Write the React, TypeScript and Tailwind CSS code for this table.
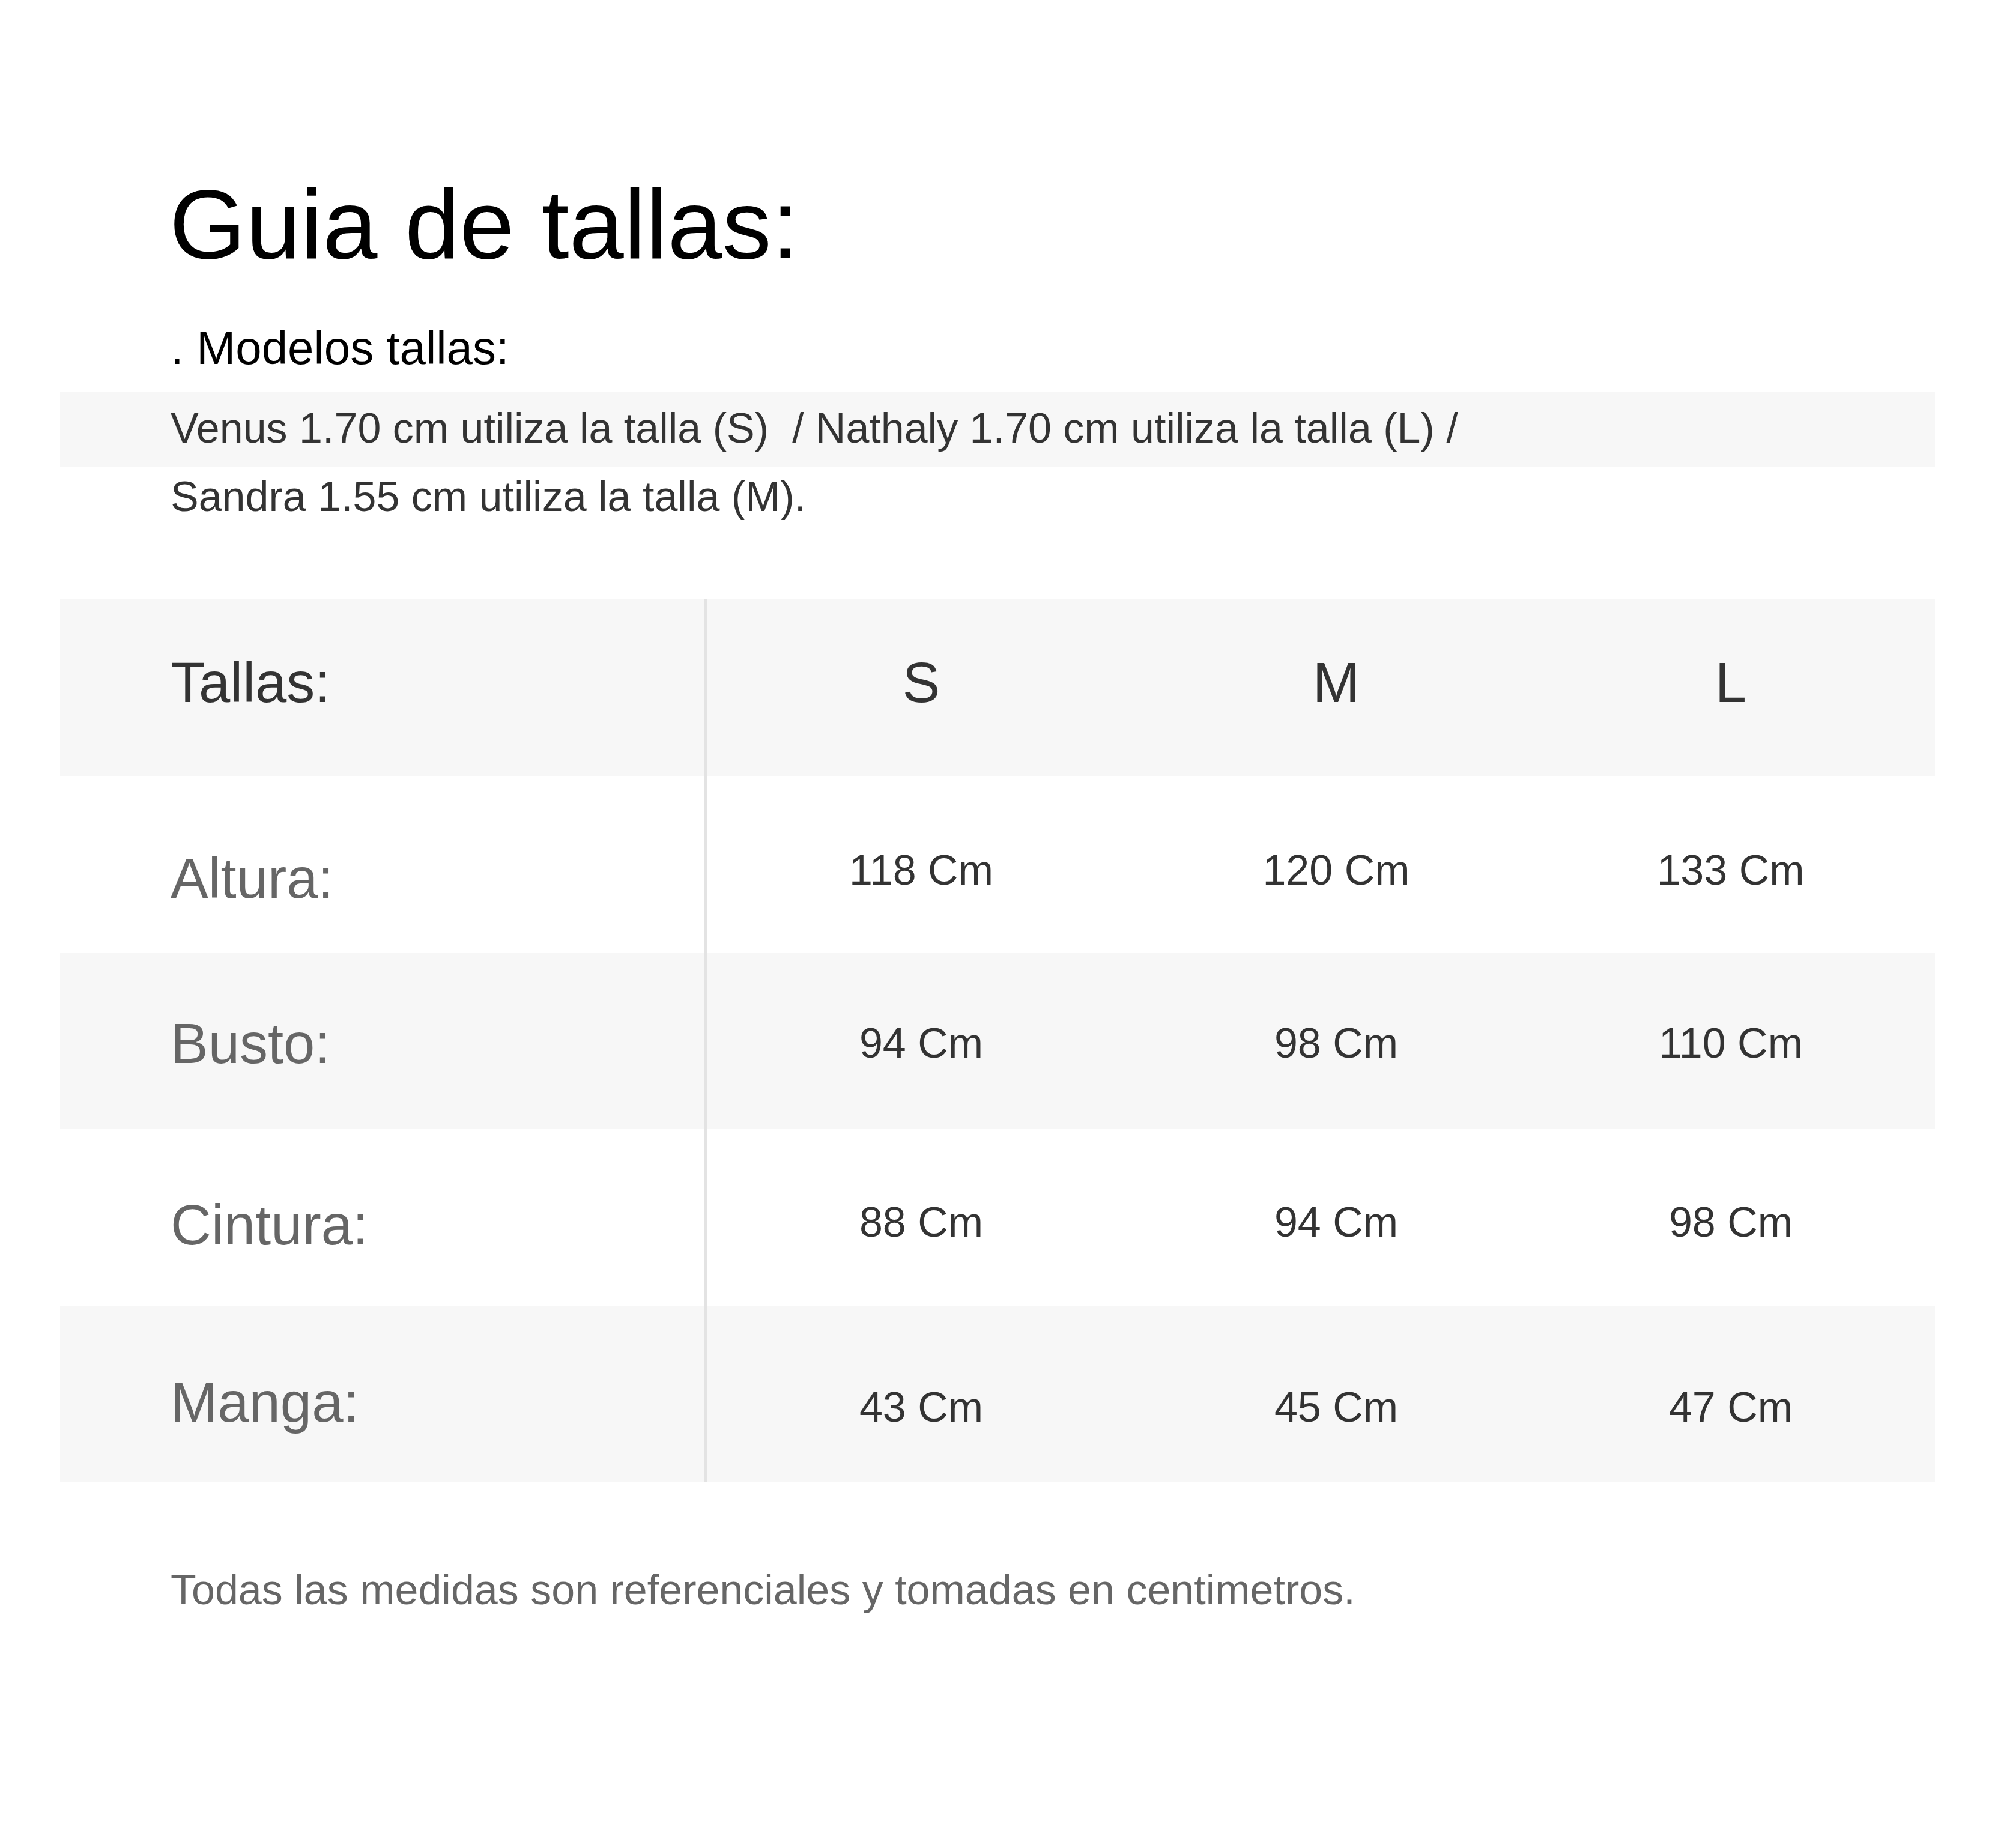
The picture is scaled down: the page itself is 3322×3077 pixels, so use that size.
export default function App() {
  // size chart rows - paddings tuned per row to match the original layout
  const rows = [
    {
      label: 'Altura:',
      values: ['118 Cm', '120 Cm', '133 Cm'],
      bg: 'bg-white',
      labelPt: 'pt-[124px]',
      valuePt: 'pt-[122px]',
    },
    {
      label: 'Busto:',
      values: ['94 Cm', '98 Cm', '110 Cm'],
      bg: 'bg-[#f7f7f7]',
      labelPt: 'pt-[105px]',
      valuePt: 'pt-[116px]',
    },
    {
      label: 'Cintura:',
      values: ['88 Cm', '94 Cm', '98 Cm'],
      bg: 'bg-white',
      labelPt: 'pt-[113px]',
      valuePt: 'pt-[120px]',
    },
    {
      label: 'Manga:',
      values: ['43 Cm', '45 Cm', '47 Cm'],
      bg: 'bg-[#f7f7f7]',
      labelPt: 'pt-[114px]',
      valuePt: 'pt-[134px]',
    },
  ];

  return (
    <div className="min-h-screen bg-white px-[100px] pt-[292px] pb-[400px] font-['Liberation_Sans',Arial,sans-serif]">
      {/* Title */}
      <h1 className="pl-[182px] text-[164px] leading-none text-black">Guia de tallas:</h1>
      <p className="mt-[84px] pl-[184px] text-[78px] leading-none text-black">. Modelos tallas:</p>

      {/* Models */}
      <div className="mt-[34px] h-[125px] bg-[#f7f7f7] pl-[184px] pt-[26px]">
        <p className="whitespace-pre text-[70px] leading-none text-[#333]">
          Venus 1.70 cm utiliza la talla (S)  / Nathaly 1.70 cm utiliza la talla (L) /
        </p>
      </div>
      <p className="mt-[15px] pl-[184px] text-[70px] leading-none text-[#333]">
        Sandra 1.55 cm utiliza la talla (M).
      </p>

      {/* Size table */}
      <div className="mt-[136px]">
        <div className="grid h-[294px] grid-cols-[1073px_4px_714px_668px_1fr] bg-[#f7f7f7] text-[94px] leading-none text-[#333]">
          <div className="pl-[184px] pt-[92px]">Tallas:</div>
          <div className="bg-[#e3e3e3]" />
          <div className="pt-[92px] text-center">S</div>
          <div className="pt-[92px] text-center">M</div>
          <div className="pr-[17px] pt-[92px] text-center">L</div>
        </div>

        {rows.map((row) => (
          <div
            key={row.label}
            className={`grid h-[294px] grid-cols-[1073px_4px_714px_668px_1fr] ${row.bg}`}
          >
            <div className={`pl-[184px] text-[94px] leading-none text-[#666] ${row.labelPt}`}>{row.label}</div>
            <div className="bg-[#e3e3e3]" />
            {row.values.map((v, i) => (
              <div
                key={i}
                className={`text-center text-[70px] leading-none text-[#333] ${row.valuePt} ${i === 2 ? 'pr-[17px]' : ''}`}
              >
                {v}
              </div>
            ))}
          </div>
        ))}
      </div>

      {/* Footer note */}
      <p className="mt-[144px] pl-[184px] text-[70px] leading-none text-[#666]">
        Todas las medidas son referenciales y tomadas en centimetros.
      </p>
    </div>
  );
}
